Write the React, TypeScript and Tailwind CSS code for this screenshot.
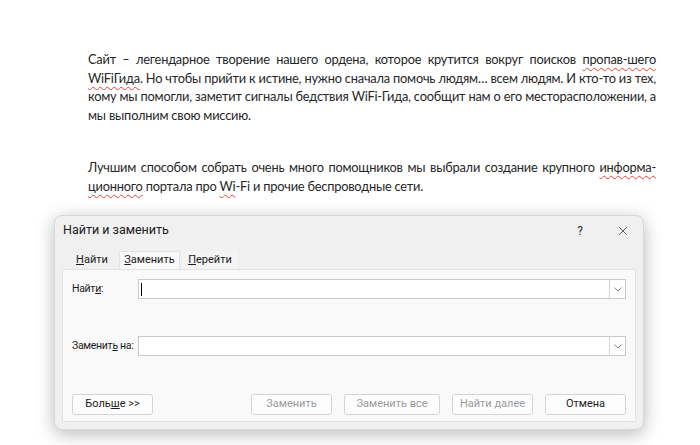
import { X } from "lucide-react";

const wavy = "underline decoration-wavy decoration-[#e0443a] decoration-1 underline-offset-[3px]";

const Line = ({ children, last }: { children: React.ReactNode; last?: boolean }) => (
  <div className={last ? "whitespace-nowrap" : "whitespace-nowrap text-justify [text-align-last:justify]"}>{children}</div>
);

const Btn = ({ label, w, disabled }: { label: React.ReactNode; w: string; disabled?: boolean }) => (
  <div
    className={`${w} h-[21px] flex items-center justify-center rounded-[3px] border border-[#d4d4d4] bg-[#fdfdfd] text-[11px] ${
      disabled ? "text-[#9a9a9a]" : "text-[#1b1b1b]"
    }`}
  >
    {label}
  </div>
);

const Field = ({ label, cursor }: { label: React.ReactNode; cursor?: boolean }) => (
  <div className="flex items-center">
    <div className="w-[66px] shrink-0 whitespace-nowrap text-[10.5px] tracking-[-0.3px] text-[#1b1b1b]">{label}</div>
    <div className="flex-1 h-[20px] flex border border-[#c9c9c9] bg-white">
      <div className="flex-1 flex items-center pl-[2px]">
        {cursor && <div className="w-px h-[13px] bg-black" />}
      </div>
      <div className="w-[16px] border-l border-[#d6d6d6] flex items-center justify-center">
        <svg width="8" height="5" viewBox="0 0 8 5">
          <path d="M0.5 0.5 L4 4 L7.5 0.5" fill="none" stroke="#8a8a8a" strokeWidth="1" />
        </svg>
      </div>
    </div>
  </div>
);

export default function App() {
  return (
    <div className="w-[700px] h-[445px] bg-white overflow-hidden font-['Lato',sans-serif]">
      <div className="pt-[50px] pl-[88px] w-[656px] text-[12.8px] tracking-[-0.2px] leading-[18.5px] text-[#262626]">
        <Line>
          Сайт – легендарное творение нашего ордена, которое крутится вокруг поисков{" "}
          <span className={wavy}>пропав-шего</span>
        </Line>
        <Line>
          <span className={wavy}>WiFiГида</span>. Но чтобы прийти к истине, нужно сначала помочь людям… всем людям. И кто-то из тех,
        </Line>
        <Line>
          кому мы помогли, заметит сигналы бедствия WiFi-Гида, сообщит нам о его месторасположении, а
        </Line>
        <Line last>мы выполним свою миссию.</Line>
        <div className="h-[34px]" />
        <Line>
          Лучшим способом собрать очень много помощников мы выбрали создание крупного{" "}
          <span className={wavy}>информа-</span>
        </Line>
        <Line last>
          <span className={wavy}>ционного</span> портала про <span className={wavy}>Wi</span>-Fi и прочие беспроводные сети.
        </Line>
      </div>

      <div className="mt-[20px] ml-[54px] w-[590px] h-[215px] rounded-[8px] border border-[#d8d8d8] bg-[#f0f0f0] shadow-[0_4px_18px_rgba(0,0,0,0.28)] flex flex-col font-['Roboto',sans-serif] text-[#1b1b1b]">
        <div className="h-[29px] flex items-center pl-[8px] pr-[13px]">
          <span className="text-[12.5px] flex-1">Найти и заменить</span>
          <span className="text-[12px] mr-[33px] text-[#333]">?</span>
          <X size={14} strokeWidth={1.3} className="text-[#333]" />
        </div>
        <div className="mt-[6px] ml-[10px] flex h-[18px] text-[11px]">
          <div className="w-[54px] flex items-center justify-center">
            <span><u>Н</u>айти</span>
          </div>
          <div className="w-[61px] flex items-center justify-center bg-[#f9f9f9] border-t border-x border-[#e3e3e3]">
            <span><u>З</u>аменить</span>
          </div>
          <div className="w-[56px] ml-[2px] flex items-center justify-center bg-[#f4f4f4]">
            <span><u>П</u>ерейти</span>
          </div>
        </div>
        <div className="mx-[7px] mb-[7px] flex-1 bg-[#f9f9f9] border border-[#e3e3e3] px-[9px] pt-[9px] flex flex-col">
          <Field label={<span>Найт<u>и</u>:</span>} cursor />
          <div className="h-[37px]" />
          <Field label={<span>Заменит<u>ь</u> на:</span>} />
          <div className="flex-1" />
          <div className="flex pb-[6px]">
            <Btn w="w-[81px]" label={<span>Боль<u>ш</u>е &gt;&gt;</span>} />
            <div className="flex-1" />
            <div className="flex gap-[12px]">
              <Btn w="w-[81px]" label="Заменить" disabled />
              <Btn w="w-[96px]" label="Заменить все" disabled />
              <Btn w="w-[81px]" label="Найти далее" disabled />
              <Btn w="w-[81px]" label="Отмена" />
            </div>
          </div>
        </div>
      </div>
    </div>
  );
}
